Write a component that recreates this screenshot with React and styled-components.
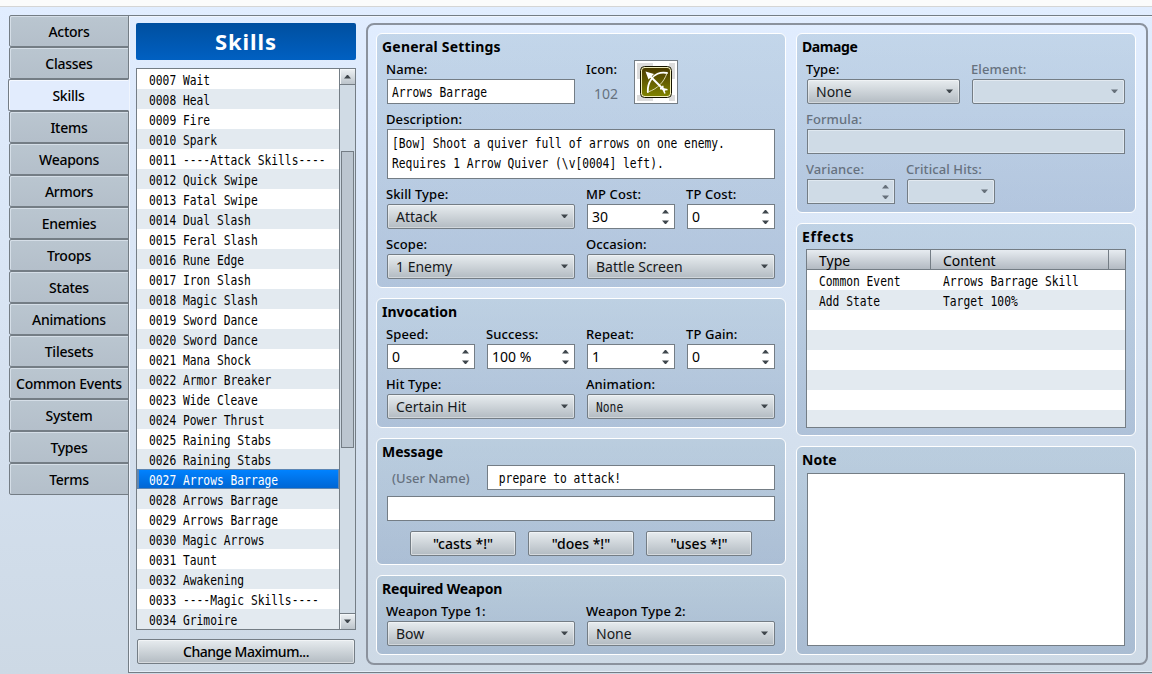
import styled, { createGlobalStyle } from "styled-components";

const tabs = [
  "Actors",
  "Classes",
  "Skills",
  "Items",
  "Weapons",
  "Armors",
  "Enemies",
  "Troops",
  "States",
  "Animations",
  "Tilesets",
  "Common Events",
  "System",
  "Types",
  "Terms",
];

const skills = [
  "0007 Wait",
  "0008 Heal",
  "0009 Fire",
  "0010 Spark",
  "0011 ----Attack Skills----",
  "0012 Quick Swipe",
  "0013 Fatal Swipe",
  "0014 Dual Slash",
  "0015 Feral Slash",
  "0016 Rune Edge",
  "0017 Iron Slash",
  "0018 Magic Slash",
  "0019 Sword Dance",
  "0020 Sword Dance",
  "0021 Mana Shock",
  "0022 Armor Breaker",
  "0023 Wide Cleave",
  "0024 Power Thrust",
  "0025 Raining Stabs",
  "0026 Raining Stabs",
  "0027 Arrows Barrage",
  "0028 Arrows Barrage",
  "0029 Arrows Barrage",
  "0030 Magic Arrows",
  "0031 Taunt",
  "0032 Awakening",
  "0033 ----Magic Skills----",
  "0034 Grimoire",
];

const effects = [
  ["Common Event", "Arrows Barrage Skill"],
  ["Add State", "Target 100%"],
  [],
  [],
  [],
  [],
  [],
  [],
];

function Arrow({ up, dim }) {
  return (
    <svg width="8" height="5" viewBox="0 0 8 5">
      <path
        d={up ? "M0 4.5 L3 1 H4 L7 4.5 Z" : "M0 0.5 L3 4 H4 L7 0.5 Z"}
        fill={dim ? "#66707a" : "#3f464c"}
      />
    </svg>
  );
}

function Field({ label, width, dim, children }) {
  return (
    <FieldBox $width={width}>
      <Label $dim={dim}>{label}</Label>
      {children}
    </FieldBox>
  );
}

function Select({ value, dim, mono }) {
  return (
    <SelectBox $dim={dim}>
      {mono ? <Mono>{value}</Mono> : <span>{value}</span>}
      <Arrow dim={dim} />
    </SelectBox>
  );
}

function Spin({ value, dim }) {
  return (
    <Input $dim={dim}>
      <span>{value}</span>
      <SpinArrows>
        <Arrow up dim={dim} />
        <Arrow dim={dim} />
      </SpinArrows>
    </Input>
  );
}

function BowIcon() {
  return (
    <svg width="32" height="32" viewBox="0 0 32 32">
      <defs>
        <linearGradient id="olive" x1="0" y1="0" x2="0" y2="1">
          <stop offset="0" stopColor="#4b3b00" />
          <stop offset="1" stopColor="#7f8200" />
        </linearGradient>
      </defs>
      <rect x="0.5" y="0.5" width="31" height="31" rx="4" fill="#f2efbc" stroke="#161400" />
      <rect x="2" y="2" width="28" height="28" rx="3" fill="url(#olive)" />
      <path
        d="M27 7 C20 5.5 14 8.5 11.5 13 C8.5 17 7.5 21 7.8 26"
        fill="none"
        stroke="#fff"
        strokeWidth="1.8"
        strokeLinecap="round"
      />
      <path d="M27 7 C24 16 18 22.5 8 26" fill="none" stroke="#e8e4c0" strokeWidth="0.9" />
      <path d="M9 9 L25 25" stroke="#fff" strokeWidth="2" />
      <path d="M5.5 5.5 L14 8 L8.5 13.5 Z" fill="#fff" />
      <path
        d="M22.8 19.8 V22.8 L27.5 23.8 M20 22.8 H22.8 L25 27.5"
        fill="none"
        stroke="#fff"
        strokeWidth="1.5"
      />
    </svg>
  );
}

export default function App() {
  return (
    <>
      <GlobalStyle />
      <Page>
        <TopStrip />
        <Window>
          <TabList>
            {tabs.map((tab) => (
              <Tab key={tab} $active={tab === "Skills"}>
                {tab}
              </Tab>
            ))}
          </TabList>

          <Content>
            <Sidebar>
              <Title>Skills</Title>
              <ListBox>
                <List>
                  {skills.map((skill) => (
                    <ListRow key={skill} $active={skill.startsWith("0027")}>
                      <Mono>{skill}</Mono>
                    </ListRow>
                  ))}
                </List>
                <Scrollbar>
                  <ScrollButton>
                    <Arrow up />
                  </ScrollButton>
                  <Track>
                    <Thumb />
                  </Track>
                  <ScrollButton $bottom>
                    <Arrow />
                  </ScrollButton>
                </Scrollbar>
              </ListBox>
              <ChangeButton>Change Maximum...</ChangeButton>
            </Sidebar>

            <Editor>
              <Column $width={410}>
                <Group $height={255}>
                  <GroupTitle $spacing={0.2}>General Settings</GroupTitle>
                  <Row>
                    <Field label="Name:" width={188}>
                      <Input>
                        <Mono>Arrows Barrage</Mono>
                      </Input>
                    </Field>
                    <IconField>
                      <Field label="Icon:" width={47}>
                        <IconIndex>102</IconIndex>
                      </Field>
                      <IconFrame>
                        <Checker>
                          <BowIcon />
                        </Checker>
                      </IconFrame>
                    </IconField>
                  </Row>
                  <Field label="Description:" width={388}>
                    <TextArea>
                      <Mono>[Bow] Shoot a quiver full of arrows on one enemy.</Mono>
                      <Mono>Requires 1 Arrow Quiver (\v[0004] left).</Mono>
                    </TextArea>
                  </Field>
                  <Row>
                    <Field label="Skill Type:" width={188}>
                      <Select value="Attack" />
                    </Field>
                    <Field label="MP Cost:" width={88}>
                      <Spin value="30" />
                    </Field>
                    <Field label="TP Cost:" width={88}>
                      <Spin value="0" />
                    </Field>
                  </Row>
                  <Row>
                    <Field label="Scope:" width={188}>
                      <Select value="1 Enemy" />
                    </Field>
                    <Field label="Occasion:" width={188}>
                      <Select value="Battle Screen" />
                    </Field>
                  </Row>
                </Group>

                <Group $height={130}>
                  <GroupTitle>Invocation</GroupTitle>
                  <Row>
                    <Field label="Speed:" width={88}>
                      <Spin value="0" />
                    </Field>
                    <Field label="Success:" width={88}>
                      <Spin value="100 %" />
                    </Field>
                    <Field label="Repeat:" width={88}>
                      <Spin value="1" />
                    </Field>
                    <Field label="TP Gain:" width={88}>
                      <Spin value="0" />
                    </Field>
                  </Row>
                  <Row>
                    <Field label="Hit Type:" width={188}>
                      <Select value="Certain Hit" />
                    </Field>
                    <Field label="Animation:" width={188}>
                      <Select value="None" mono />
                    </Field>
                  </Row>
                </Group>

                <Group $height={127}>
                  <GroupTitle>Message</GroupTitle>
                  <MessageRow>
                    <UserName>(User Name)</UserName>
                    <Input>
                      <Mono> prepare to attack!</Mono>
                    </Input>
                  </MessageRow>
                  <MessageRow>
                    <Input />
                  </MessageRow>
                  <ButtonRow>
                    <Button>"casts *!"</Button>
                    <Button>"does *!"</Button>
                    <Button>"uses *!"</Button>
                  </ButtonRow>
                </Group>

                <Group $height={80}>
                  <GroupTitle $spacing={-0.2}>Required Weapon</GroupTitle>
                  <Row>
                    <Field label="Weapon Type 1:" width={188}>
                      <Select value="Bow" />
                    </Field>
                    <Field label="Weapon Type 2:" width={188}>
                      <Select value="None" />
                    </Field>
                  </Row>
                </Group>
              </Column>

              <Column $width={340}>
                <Group $height={180}>
                  <GroupTitle $spacing={-0.4}>Damage</GroupTitle>
                  <Row>
                    <Field label="Type:" width={153}>
                      <Select value="None" />
                    </Field>
                    <Field label="Element:" width={153} dim>
                      <Select dim />
                    </Field>
                  </Row>
                  <Field label="Formula:" width={318} dim>
                    <Input $dim />
                  </Field>
                  <Row>
                    <Field label="Variance:" width={88} dim>
                      <Spin dim />
                    </Field>
                    <Field label="Critical Hits:" width={88} dim>
                      <Select dim />
                    </Field>
                  </Row>
                </Group>

                <Group $height={213}>
                  <GroupTitle $spacing={0.7}>Effects</GroupTitle>
                  <Table>
                    <TableHead>
                      <HeadCell>Type</HeadCell>
                      <HeadCell>Content</HeadCell>
                      <HeadCell />
                    </TableHead>
                    {effects.map(([type, content], i) => (
                      <TableRow key={i}>
                        <Mono>{type}</Mono>
                        <Mono>{content}</Mono>
                      </TableRow>
                    ))}
                  </Table>
                </Group>

                <Group $height={209}>
                  <GroupTitle>Note</GroupTitle>
                  <NoteArea />
                </Group>
              </Column>
            </Editor>
          </Content>
        </Window>
      </Page>
    </>
  );
}

const GlobalStyle = createGlobalStyle`
  * {
    box-sizing: border-box;
  }

  body {
    margin: 0;
    overflow: hidden;
    font-family: "Noto Sans", "Open Sans", sans-serif;
    font-size: 14px;
    color: #000;
  }

  svg {
    display: block;
    flex-shrink: 0;
  }
`;

const Page = styled.div`
  width: 1152px;
  height: 674px;
  display: flex;
  flex-direction: column;
  overflow: hidden;
`;

const TopStrip = styled.div`
  height: 7px;
  background: #fbfbfb;
  border-bottom: 1px solid #d5d5d5;
`;

const Window = styled.div`
  flex: 1;
  display: flex;
  padding: 8px 0 1px 8px;
  background: linear-gradient(#e1edff, #cdd9e5);
`;

const TabList = styled.div`
  width: 121px;
  margin-right: -1px;
  padding-left: 1px;
  display: flex;
  flex-direction: column;
  z-index: 1;
`;

const Tab = styled.div`
  height: 32px;
  margin-left: ${({ $active }) => ($active ? "-1px" : "0")};
  border: 1px solid #747d85;
  border-right-color: ${({ $active }) => ($active ? "#e2ecfd" : "#747d85")};
  border-radius: 2px 0 0 2px;
  background: ${({ $active }) =>
    $active ? "#e2ecfd" : "linear-gradient(#bac6d0, #b4bfca)"};
  box-shadow: inset 1px 1px 0 ${({ $active }) => ($active ? "#f4f8ff" : "#d5dee7")};
  text-align: center;
  line-height: 32px;
  font-weight: 500;
  letter-spacing: -0.25px;
  white-space: nowrap;
`;

const Content = styled.div`
  flex: 1;
  display: flex;
  padding: 7px 4px 7px 7px;
  border: 1px solid #747d85;
  border-right: none;
  box-shadow: inset 1px 1px 0 #f0f5fd, inset 0 -1px 0 #e4edf6;
`;

const Sidebar = styled.div`
  width: 220px;
  margin-right: 10px;
`;

const Title = styled.div`
  height: 37px;
  border-radius: 2px;
  background: linear-gradient(#004f9f, #0060c2);
  color: #fff;
  text-align: center;
  font-size: 22px;
  line-height: 37px;
  font-weight: 700;
  letter-spacing: 0.9px;
`;

const ListBox = styled.div`
  display: flex;
  height: 562px;
  margin-top: 8px;
  border: 1px solid #747d85;
`;

const List = styled.div`
  flex: 1;
  min-width: 0;
`;

const Mono = styled.span`
  display: inline-block;
  font-family: "DejaVu Sans Mono", monospace;
  font-size: 14px;
  white-space: pre;
  transform: scaleX(0.806);
  transform-origin: left center;
`;

const ListRow = styled.div`
  height: 20px;
  padding-left: 12px;
  line-height: 22px;
  background: #fff;
  display: flex;

  &:nth-child(even) {
    background: #e3eaf0;
  }

  ${({ $active }) =>
    $active &&
    `
    && {
      padding-left: 10px;
      line-height: 20px;
      color: #fff;
      border: 1px solid #5c86b4;
      border-left-width: 2px;
      background: linear-gradient(#0082ff, #0066d4);
    }
  `}
`;

const Scrollbar = styled.div`
  width: 16px;
  flex-shrink: 0;
  display: flex;
  flex-direction: column;
  border-left: 1px solid #747d85;
  background: #d0dbe5;
`;

const ScrollButton = styled.div`
  height: 16px;
  display: flex;
  align-items: center;
  justify-content: center;
  background: linear-gradient(#edf1f4, #bcc4cb);
  border: 0 solid #747d85;
  border-bottom-width: ${({ $bottom }) => ($bottom ? "0" : "1px")};
  border-top-width: ${({ $bottom }) => ($bottom ? "1px" : "0")};
  box-shadow: inset 1px 1px 0 #f4f7f9;
`;

const Track = styled.div`
  flex: 1;
  padding: 66px 1px 0;
`;

const Thumb = styled.div`
  width: 13px;
  height: 297px;
  border: 1px solid #747d85;
  background: #bcc6d0;
`;

const Button = styled.button`
  width: 106px;
  height: 25px;
  padding: 0;
  border: 1px solid #747d85;
  border-radius: 2px;
  background: linear-gradient(#e7ecef, #b3bbc2);
  box-shadow: inset 0 0 0 1px rgba(255, 255, 255, 0.45);
  font: inherit;
  font-weight: 500;
  line-height: 23px;
  color: #000;
`;

const ChangeButton = styled(Button)`
  display: block;
  width: 218px;
  margin: 9px 0 0 1px;
  letter-spacing: -0.45px;
`;

const Editor = styled.div`
  width: 782px;
  height: 642px;
  display: flex;
  gap: 10px;
  padding: 8px;
  border: 2px solid #8b929d;
  border-radius: 8px;
`;

const Column = styled.div`
  width: ${({ $width }) => $width}px;
  flex-shrink: 0;
  display: flex;
  flex-direction: column;
  gap: 10px;
`;

const Group = styled.section`
  height: ${({ $height }) => $height}px;
  padding: 0 10px;
  border: 1px solid #fff;
  border-radius: 6px;
  background: linear-gradient(rgba(127, 162, 187, 0.3), rgba(86, 121, 165, 0.3));
`;

const GroupTitle = styled.h2`
  height: 20px;
  margin: 0 0 0 -5px;
  padding-top: 3px;
  font-size: 14px;
  line-height: 20px;
  font-weight: 700;
  letter-spacing: ${({ $spacing }) => $spacing || 0}px;
`;

const Row = styled.div`
  display: flex;
  gap: 12px;
`;

const FieldBox = styled.div`
  width: ${({ $width }) => $width}px;
`;

const Label = styled.div`
  height: 25px;
  margin-left: -1px;
  padding-top: 4px;
  font-size: 13px;
  line-height: 22px;
  font-weight: 500;
  letter-spacing: 0.1px;
  white-space: nowrap;
  color: ${({ $dim }) => ($dim ? "#66717e" : "#000")};
`;

const Input = styled.div`
  height: 25px;
  display: flex;
  align-items: center;
  justify-content: space-between;
  padding: 0 4px;
  border: 1px solid #747d85;
  background: ${({ $dim }) => ($dim ? "#cfdbe6" : "#fff")};
  box-shadow: ${({ $dim }) => ($dim ? "inset 0 0 0 1px #dfe8f0" : "none")};
`;

const SpinArrows = styled.div`
  display: flex;
  flex-direction: column;
  gap: 6px;
`;

const SelectBox = styled.div`
  height: 25px;
  display: flex;
  align-items: center;
  justify-content: space-between;
  padding: 0 5px 0 8px;
  border: 1px solid #747d85;
  border-radius: 2px;
  background: ${({ $dim }) =>
    $dim ? "#cfdbe6" : "linear-gradient(#e7ecef, #b3bbc2)"};
  box-shadow: inset 0 0 0 1px rgba(255, 255, 255, 0.4);
  color: #16191c;
`;

const IconField = styled.div`
  display: flex;
  align-items: flex-end;
`;

const IconIndex = styled.div`
  height: 25px;
  padding: 4px 0 0 7px;
  line-height: 22px;
  color: #66717e;
`;

const IconFrame = styled.div`
  width: 44px;
  height: 44px;
  padding: 2px;
  border: 1px solid #747d85;
  background: #fff;
`;

const Checker = styled.div`
  width: 38px;
  height: 38px;
  display: flex;
  align-items: center;
  justify-content: center;
  background: conic-gradient(#fff 25%, #dcdcdc 0 50%, #fff 0 75%, #dcdcdc 0) 0 0 / 32px
    32px;
`;

const TextArea = styled.div`
  height: 50px;
  display: flex;
  flex-direction: column;
  align-items: flex-start;
  padding: 3px 4px 0;
  border: 1px solid #747d85;
  background: #fff;
  line-height: 20px;
`;

const MessageRow = styled.div`
  display: flex;
  height: 25px;
  margin-top: 6px;

  ${Input} {
    flex: 1;
  }
`;

const UserName = styled.div`
  width: 100px;
  padding-left: 5px;
  font-size: 13px;
  line-height: 26px;
  font-weight: 500;
  color: #66717e;
`;

const ButtonRow = styled.div`
  display: flex;
  justify-content: center;
  gap: 12px;
  margin-top: 10px;
`;

const Table = styled.div`
  height: 179px;
  margin: 5px -1px 0;
  border: 1px solid #747d85;
  overflow: hidden;
`;

const TableHead = styled.div`
  display: grid;
  grid-template-columns: 124px 178px 1fr;
  grid-template-rows: 19px;
  height: 20px;
  border-bottom: 1px solid #747d85;
  background: linear-gradient(#e7ecf1, #b3bac2);
`;

const HeadCell = styled.div`
  padding-left: 12px;
  line-height: 21px;
  border-right: 1px solid #747d85;

  &:last-child {
    border-right: none;
  }
`;

const TableRow = styled.div`
  display: grid;
  grid-template-columns: 124px 1fr;
  height: 20px;
  padding-left: 12px;
  line-height: 22px;
  background: #fff;

  &:nth-child(odd) {
    background: #e3eaf0;
  }
`;

const NoteArea = styled.div`
  height: 173px;
  margin-top: 6px;
  border: 1px solid #747d85;
  background: #fff;
`;
